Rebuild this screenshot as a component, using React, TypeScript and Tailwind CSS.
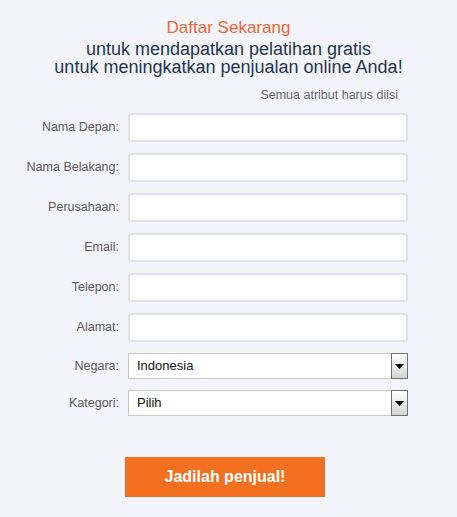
import React from 'react';

const textFields = ['Nama Depan:', 'Nama Belakang:', 'Perusahaan:', 'Email:', 'Telepon:', 'Alamat:'];

const SelectBox: React.FC<{ value: string }> = ({ value }) => (
  <div className="w-[280px] h-[26px] bg-white border border-[#c8c8c8] flex items-center justify-between">
    <span className="pl-[8px] text-[13px] text-[#111]">{value}</span>
    <div className="w-[17px] h-[26px] -mr-px -my-px border border-[#707070] bg-gradient-to-b from-white to-[#d4d4d4] flex items-center justify-center">
      <svg width="9" height="5" viewBox="0 0 9 5">
        <polygon points="0,0 9,0 4.5,5" fill="#000" />
      </svg>
    </div>
  </div>
);

const App: React.FC = () => {
  return (
    <div className="min-h-screen bg-[#f4f4fd] font-['Liberation_Sans',Arial,sans-serif] pt-[18px]">
      {/* Heading */}
      <div className="text-center">
        <h1 className="text-[17px] leading-[20px] text-[#f26531]">Daftar Sekarang</h1>
        <p className="text-[18px] leading-[18px] text-[#1f3650] mt-[2px]">
          untuk mendapatkan pelatihan gratis
          <br />
          untuk meningkatkan penjualan online Anda!
        </p>
      </div>

      <div className="w-[398px] text-right text-[12.5px] text-[#666] mt-[11px] leading-[16px]">
        Semua atribut harus diisi
      </div>

      {/* Form */}
      <div className="mt-[10px] flex flex-col gap-[11px]">
        {textFields.map((label) => (
          <div key={label} className="flex items-center">
            <label className="w-[120px] text-right text-[12.5px] text-[#5a5a5a] pr-[1px]">{label}</label>
            <div className="ml-[8px] w-[280px] h-[29px] bg-white rounded-[3px] border-2 border-[#e2e2e6]" />
          </div>
        ))}
        <div className="flex items-center">
          <label className="w-[120px] text-right text-[12.5px] text-[#5a5a5a] pr-[1px]">Negara:</label>
          <div className="ml-[8px]">
            <SelectBox value="Indonesia" />
          </div>
        </div>
        <div className="flex items-center">
          <label className="w-[120px] text-right text-[12.5px] text-[#5a5a5a] pr-[1px]">Kategori:</label>
          <div className="ml-[8px]">
            <SelectBox value="Pilih" />
          </div>
        </div>
      </div>

      <div className="mt-[41px] pl-[125px]">
        <button className="w-[200px] h-[40px] bg-[#f37021] text-white font-bold text-[16px]">
          Jadilah penjual!
        </button>
      </div>
    </div>
  );
};

export default App;
